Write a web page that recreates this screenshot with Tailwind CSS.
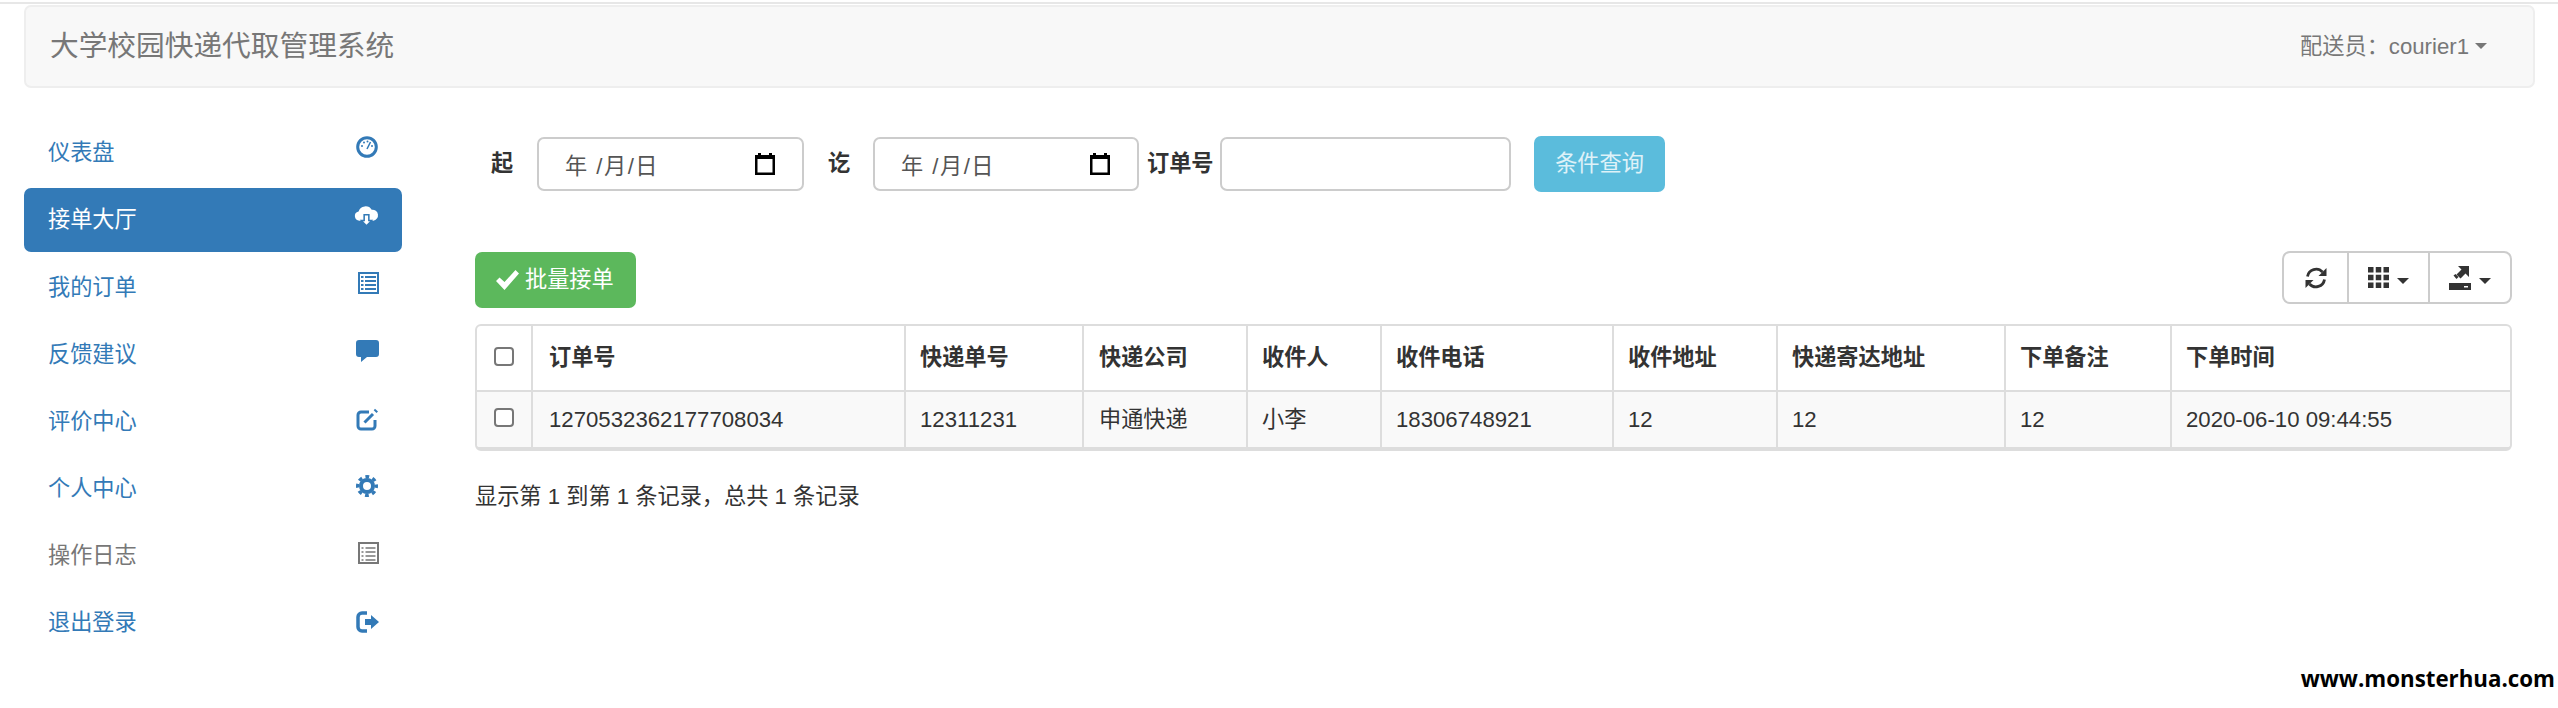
<!DOCTYPE html>
<html lang="zh-CN">
<head>
  <meta charset="UTF-8" />
  <title>大学校园快递代取管理系统</title>
  <script src="https://cdn.jsdelivr.net/npm/@tailwindcss/browser@4"></script>
</head>
<body class="relative h-[708px] overflow-hidden bg-white text-[22.2px] text-[#333] font-['Liberation_Sans','Noto_Sans_CJK_SC',sans-serif]">

  <div class="mt-[2px] h-[2px] bg-[#e7e7e7]"></div>

  <!-- Navbar -->
  <header class="ml-[24px] mt-[1px] flex h-[83px] w-[2511px] items-center justify-between rounded-[7px] border-2 border-[#eee] bg-[#f8f8f8] pl-[24px] pr-[46px] text-[#777]">
    <div class="text-[28.7px]">大学校园快递代取管理系统</div>
    <div class="flex items-center">
      <span>配送员：courier1</span>
      <span class="ml-[6px] h-0 w-0 border-x-[6px] border-t-[6px] border-x-transparent border-t-[#777]"></span>
    </div>
  </header>

  <div class="flex">
    <!-- Sidebar -->
    <nav class="ml-[24px] flex w-[378px] shrink-0 flex-col gap-[3.1px] pt-[33px] text-[#337ab7]">
      <a class="flex h-[64px] items-center justify-between rounded-[7px] pl-[24px] pr-[24px]">
        <span>仪表盘</span>
        <svg class="mb-[12px] h-[22px] w-[22px]" viewBox="0 0 22 22"><circle cx="11" cy="11" r="9.3" fill="none" stroke="currentColor" stroke-width="3"/><path d="M11 13 14.5 6" stroke="currentColor" stroke-width="1.6"/><circle cx="6" cy="10" r="1" fill="currentColor"/><circle cx="8" cy="6.5" r="1" fill="currentColor"/><circle cx="11.5" cy="5.5" r="1" fill="currentColor"/><circle cx="16" cy="10" r="1" fill="currentColor"/></svg>
      </a>
      <a class="flex h-[64px] items-center justify-between rounded-[7px] bg-[#337ab7] pl-[24px] pr-[23px] text-white">
        <span>接单大厅</span>
        <svg class="mb-[8px] h-[26px] w-[25px]" viewBox="0 0 24 24"><path fill="#fff" d="M5.5 16.5A4.5 4.5 0 0 1 4.400 7.600 7 7 0 0 1 17 6a5.300 5.300 0 0 1 1.500 10.500z"/><path fill="#337ab7" d="M9 10h6v5.500h3.500L12 22.500l-6.500-7H9z"/><path fill="#fff" d="M10.500 11.500h3v5.500h1.800L12 20.500 8.700 17h1.800z"/></svg>
      </a>
      <a class="flex h-[64px] items-center justify-between rounded-[7px] pl-[24px] pr-[23px]">
        <span>我的订单</span>
        <svg class="mb-[9px] h-[22px] w-[21px]" viewBox="0 0 21 22"><rect x="1" y="1" width="19" height="20" fill="none" stroke="currentColor" stroke-width="2"/><path stroke="currentColor" stroke-width="2" d="M3 5h2.500M7 5h11M3 9h2.500M7 9h11M3 13h2.500M7 13h11M3 17h2.500M7 17h11"/></svg>
      </a>
      <a class="flex h-[64px] items-center justify-between rounded-[7px] pl-[24px] pr-[23px]">
        <span>反馈建议</span>
        <svg class="mb-[7px] h-[22px] w-[23px]" viewBox="0 0 23 22"><path fill="currentColor" d="M3 0h17a3 3 0 0 1 3 3v11a3 3 0 0 1-3 3H11l-6 5v-5H3a3 3 0 0 1-3-3V3a3 3 0 0 1 3-3z"/></svg>
      </a>
      <a class="flex h-[64px] items-center justify-between rounded-[7px] pl-[24px] pr-[23px]">
        <span>评价中心</span>
        <svg class="mb-[4px] h-[23px] w-[23px]" viewBox="0 0 23 23"><path fill="none" stroke="currentColor" stroke-width="3" d="M13 4H5a3 3 0 0 0-3 3v11a3 3 0 0 0 3 3h11a3 3 0 0 0 3-3v-6"/><path fill="none" stroke="currentColor" stroke-width="3" d="M8.500 14.500 17 6"/><path fill="currentColor" d="m19 0.800 3 2.700-1.500 1.500-2.800-2.800z"/></svg>
      </a>
      <a class="flex h-[64px] items-center justify-between rounded-[7px] pl-[24px] pr-[24px]">
        <span>个人中心</span>
        <svg class="mb-[4px] h-[22px] w-[22px]" viewBox="0 0 22 22"><circle cx="11" cy="11" r="6" fill="none" stroke="currentColor" stroke-width="4"/><circle cx="11" cy="11" r="9.300" fill="none" stroke="currentColor" stroke-width="3.400" stroke-dasharray="3.800 3.505" stroke-dashoffset="1.900"/></svg>
      </a>
      <a class="flex h-[64px] items-center justify-between rounded-[7px] pl-[24px] pr-[23px] text-[#777]">
        <span>操作日志</span>
        <svg class="mb-[6px] h-[22px] w-[21px]" viewBox="0 0 21 22"><rect x="1" y="1" width="19" height="20" fill="none" stroke="currentColor" stroke-width="2"/><path stroke="currentColor" stroke-width="1.500" d="M3.500 6h2M7.500 6h10M3.500 10h2M7.500 10h10M3.500 14h2M7.500 14h10M3.500 18h2M7.500 18h10"/></svg>
      </a>
      <a class="flex h-[64px] items-center justify-between rounded-[7px] pl-[24px] pr-[22px]">
        <span>退出登录</span>
        <svg class="mb-[2px] h-[22px] w-[24px]" viewBox="0 0 24 22"><path fill="none" stroke="currentColor" stroke-width="3.500" d="M11 2H6a4 4 0 0 0-4 4v10a4 4 0 0 0 4 4h5"/><path fill="currentColor" d="M9 8h6V4l8 7-8 7v-4H9z"/></svg>
      </a>
    </nav>

    <main class="ml-[73px] w-[2037px] pt-[48px]">
      <!-- Filtres -->
      <form class="flex items-center pl-[16px]">
        <label class="w-[22px] font-bold">起</label>
        <div class="ml-[24px] flex h-[54px] w-[267px] items-center justify-between rounded-[7px] border-2 border-[#ccc] bg-white pl-[26px] pr-[27px] text-[#555]">
          <span class="pt-[5px] tracking-[1.5px]">年 /月/日</span>
          <svg class="h-[22px] w-[20px]" viewBox="0 0 20 22"><path fill="#000" d="M3 0h3v2h8V0h3v2h3v20H0V2h3z"/><rect x="2.500" y="6" width="15" height="13.500" fill="#fff"/></svg>
        </div>
        <label class="ml-[24px] w-[22px] font-bold">讫</label>
        <div class="ml-[23px] flex h-[54px] w-[266px] items-center justify-between rounded-[7px] border-2 border-[#ccc] bg-white pl-[26px] pr-[27px] text-[#555]">
          <span class="pt-[5px] tracking-[1.5px]">年 /月/日</span>
          <svg class="h-[22px] w-[20px]" viewBox="0 0 20 22"><path fill="#000" d="M3 0h3v2h8V0h3v2h3v20H0V2h3z"/><rect x="2.500" y="6" width="15" height="13.500" fill="#fff"/></svg>
        </div>
        <label class="ml-[8px] w-[66px] font-bold whitespace-nowrap">订单号</label>
        <input type="text" class="ml-[7px] h-[54px] w-[291px] rounded-[7px] border-2 border-[#ccc] bg-white" />
        <button type="button" class="ml-[23px] h-[56px] w-[131px] rounded-[7px] bg-[#5bbcdc] text-white/80">条件查询</button>
      </form>

      <!-- Barre d'outils -->
      <div class="mt-[59px] flex items-start justify-between">
        <button type="button" class="mt-[1px] flex h-[56px] w-[161px] items-center rounded-[7px] bg-[#5cb85c] pl-[21px] text-white">
          <svg class="mr-[6px] h-[20px] w-[23px]" viewBox="0 0 23 20"><path fill="#fff" d="M0 11 3.500 7.500 8.500 12 19.500 0 23 3.500 8.500 20z"/></svg>
          批量接单
        </button>
        <div class="flex h-[53px] w-[230px] rounded-[8px] border-2 border-[#ccc] bg-white text-[#333]">
          <div class="flex w-[65px] items-center justify-center border-r-2 border-[#ccc]">
            <svg class="h-[22px] w-[22px]" viewBox="0 0 22 22"><path fill="none" stroke="#333" stroke-width="2.800" d="M2.500 9.500A8.700 8.700 0 0 1 17.500 5M19.500 12.500A8.700 8.700 0 0 1 4.500 17"/><path fill="#333" d="M21.500 1v8h-8zM.5 21v-8h8z"/></svg>
          </div>
          <div class="flex w-[81px] items-center justify-center gap-[8px] border-r-2 border-[#ccc]">
            <svg class="h-[21px] w-[21px]" viewBox="0 0 21 21"><path fill="#333" d="M0 0h5.500v5.500H0zM7.750 0h5.500v5.500h-5.500zM15.500 0H21v5.500h-5.500zM0 7.750h5.500v5.500H0zM7.750 7.750h5.500v5.500h-5.500zM15.500 7.750H21v5.500h-5.500zM0 15.500h5.500V21H0zM7.750 15.500h5.500V21h-5.500zM15.500 15.500H21V21h-5.500z"/></svg>
            <span class="mt-[6px] h-0 w-0 border-x-[6px] border-t-[6px] border-x-transparent border-t-[#333]"></span>
          </div>
          <div class="flex grow items-center justify-center gap-[8px]">
            <svg class="h-[24px] w-[22px]" viewBox="0 0 22 24"><path fill="#333" d="M9 0h11v11l-3.500-3.500-5 5-4-4 5-5z"/><path fill="#333" d="M4.500 9.500 6.500 8l3 3-2 2z"/><path fill="#333" d="M0 17h22v7H0z"/><path fill="#fff" d="M15 20h4v1.500h-4z"/></svg>
            <span class="mt-[6px] h-0 w-0 border-x-[6px] border-t-[6px] border-x-transparent border-t-[#333]"></span>
          </div>
        </div>
      </div>

      <!-- Tableau -->
      <div class="mt-[16px] w-[2037px] overflow-hidden rounded-[6px] border-2 border-b-[4px] border-[#ddd]">
        <table class="w-full table-fixed border-collapse">
          <colgroup>
            <col class="w-[55px]" /><col class="w-[373px]" /><col class="w-[178px]" /><col class="w-[164px]" /><col class="w-[134px]" /><col class="w-[232px]" /><col class="w-[164px]" /><col class="w-[228px]" /><col class="w-[166px]" /><col />
          </colgroup>
          <thead class="font-bold">
            <tr class="h-[65px] border-b-2 border-[#ddd] text-left">
              <th class="pb-[6px] text-center font-normal"><input type="checkbox" class="h-[19px] w-[20px] appearance-none rounded-[4px] border-2 border-[#777] bg-white align-middle" /></th>
              <th class="border-l-2 border-[#ddd] pl-[16px]">订单号</th>
              <th class="border-l-2 border-[#ddd] pl-[14px]">快递单号</th>
              <th class="border-l-2 border-[#ddd] pl-[15px]">快递公司</th>
              <th class="border-l-2 border-[#ddd] pl-[14px]">收件人</th>
              <th class="border-l-2 border-[#ddd] pl-[14px]">收件电话</th>
              <th class="border-l-2 border-[#ddd] pl-[14px]">收件地址</th>
              <th class="border-l-2 border-[#ddd] pl-[14px]">快递寄达地址</th>
              <th class="border-l-2 border-[#ddd] pl-[14px]">下单备注</th>
              <th class="border-l-2 border-[#ddd] pl-[14px]">下单时间</th>
            </tr>
          </thead>
          <tbody>
            <tr class="h-[56px] bg-[#f9f9f9]">
              <td class="pb-[6px] text-center"><input type="checkbox" class="h-[19px] w-[20px] appearance-none rounded-[4px] border-2 border-[#777] bg-white align-middle" /></td>
              <td class="border-l-2 border-[#ddd] pl-[16px]">1270532362177708034</td>
              <td class="border-l-2 border-[#ddd] pl-[14px]">12311231</td>
              <td class="border-l-2 border-[#ddd] pl-[15px]">申通快递</td>
              <td class="border-l-2 border-[#ddd] pl-[14px]">小李</td>
              <td class="border-l-2 border-[#ddd] pl-[14px]">18306748921</td>
              <td class="border-l-2 border-[#ddd] pl-[14px]">12</td>
              <td class="border-l-2 border-[#ddd] pl-[14px]">12</td>
              <td class="border-l-2 border-[#ddd] pl-[14px]">12</td>
              <td class="border-l-2 border-[#ddd] pl-[14px]">2020-06-10 09:44:55</td>
            </tr>
          </tbody>
        </table>
      </div>

      <p class="mt-[29px]">显示第 1 到第 1 条记录，总共 1 条记录</p>
    </main>
  </div>

  <!-- Filigrane -->
  <div class="absolute right-[3px] top-[662px] text-[22.3px] font-bold text-black font-['Open_Sans',sans-serif]">www.monsterhua.com</div>

</body>
</html>
